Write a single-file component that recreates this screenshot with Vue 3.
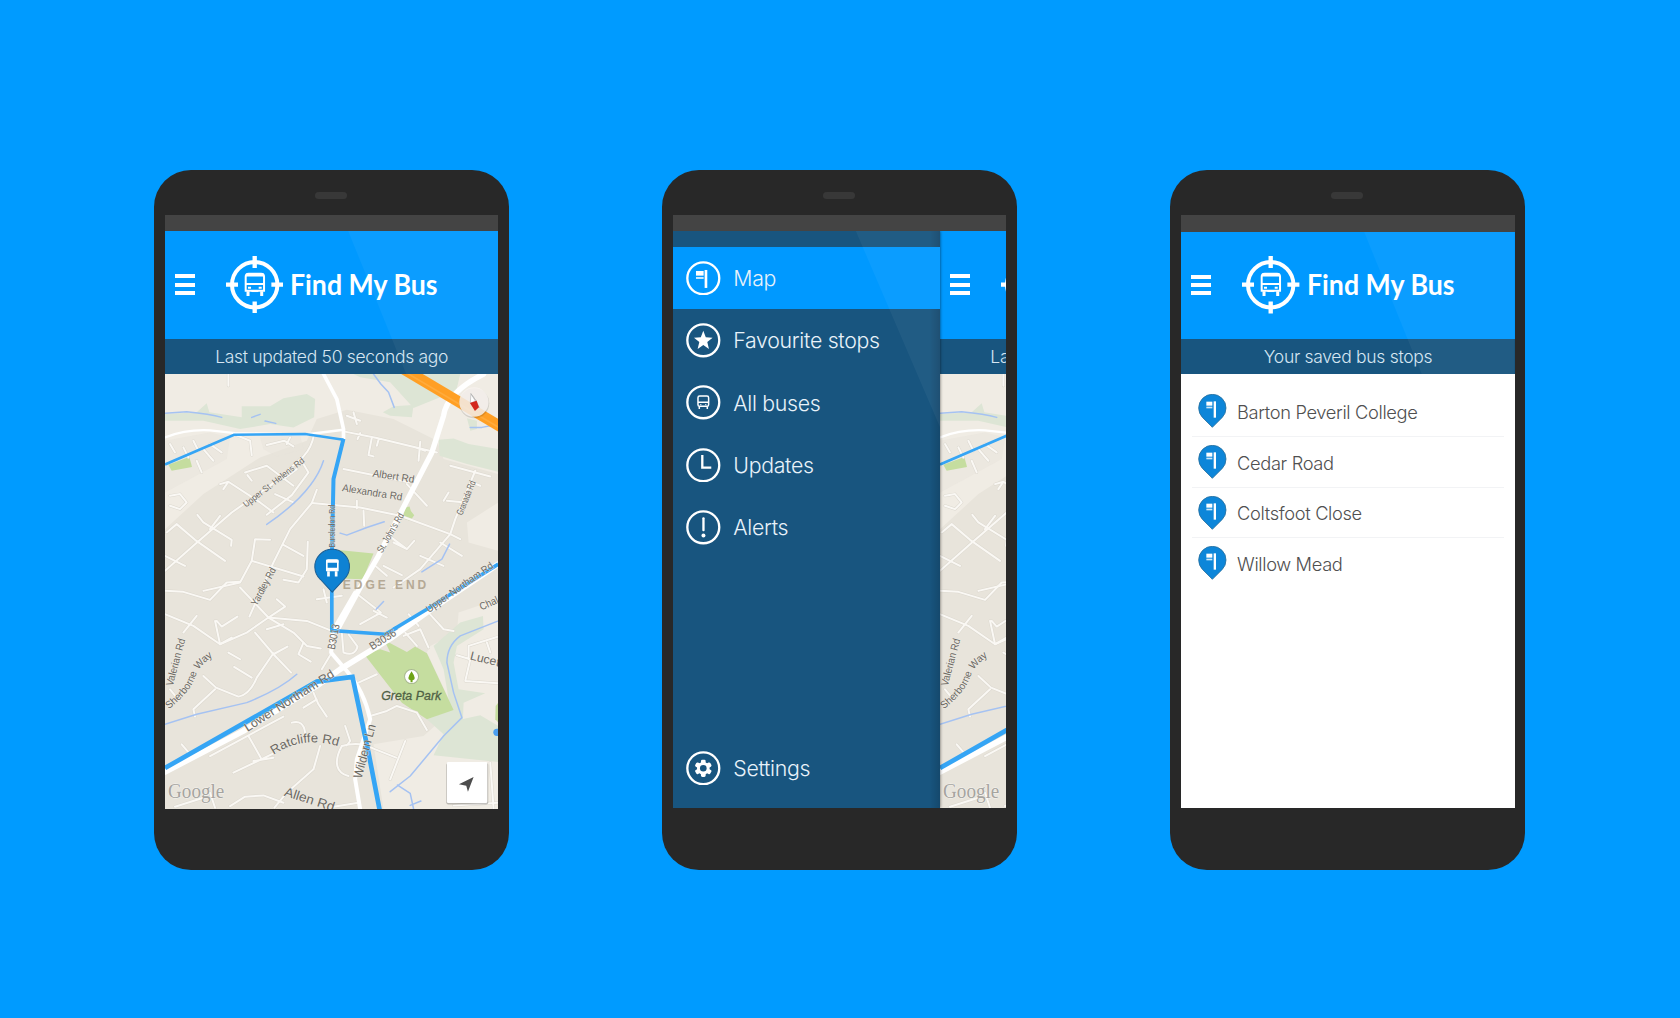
<script setup>
const screens = [
  { key: 'live', kind: 'map', title: 'Last updated 50 seconds ago', drawer: false },
  { key: 'menu', kind: 'map', title: 'Last updated 50 seconds ago', drawer: true },
  { key: 'saved', kind: 'list', title: 'Your saved bus stops', drawer: false },
]

const menu = [
  { icon: 'stop', label: 'Map' },
  { icon: 'star', label: 'Favourite stops' },
  { icon: 'bus', label: 'All buses' },
  { icon: 'clock', label: 'Updates' },
  { icon: 'alert', label: 'Alerts' },
  { icon: 'gear', label: 'Settings' },
]

const stops = ['Barton Peveril College', 'Cedar Road', 'Coltsfoot Close', 'Willow Mead']

const minorRoads = [
  'M15 605L105 525L215 430L330 350L430 262Q455 235 462 195',
  'M20 490L50 465L105 512L195 575M15 560L75 590',
  'M112 437L130 460L215 512L213 530M150 480L180 440',
  'M180 345L205 338L300 400L340 430M205 338L190 360',
  'M255 310L320 290L400 350M262 318L275 335',
  'M320 437L395 378L445 310L430 285',
  'M345 375L400 400M370 330L410 300',
  'M15 665L70 668L150 692L200 640L240 638',
  'M470 362L455 402L390 480L340 580L300 670L268 742',
  'M455 402L600 415L720 440L870 495L900 510',
  'M330 512L285 510L275 575L430 622M275 575L240 640L130 665',
  'M370 527L430 560M443 518L440 600L415 640L370 632',
  'M610 425L612 470M590 418V395',
  'M550 187L650 207L830 250M600 192L592 210M635 205L625 258L640 262M655 212L650 230M780 218L775 275M765 235L795 245',
  'M550 300L750 340',
  'M945 305L885 450L870 495L780 600L700 655',
  'M870 290L990 322M935 340L960 350M740 345L800 410M850 395L865 370M915 400L860 395',
  'M680 495L740 540L762 515M740 540L700 520M840 520L905 560M780 560L850 590',
  'M670 590L725 618M645 590L680 620',
  'M225 197L270 215L275 258M320 228L372 215L400 232M390 205L380 225',
  'M70 235L85 265M30 225L45 250M100 215L115 245M130 240L160 275M150 225L185 250M110 275L125 310',
  'M30 380L60 375L80 400L60 420L30 410M205 15V50M560 140L600 155M580 130L590 165',
  'M15 735L100 770L180 825L260 790L325 745L440 755L515 785',
  'M240 655L325 745L400 790L440 830L482 838M325 745L375 712L350 690',
  'M170 755L185 772L232 742M180 825L165 755M70 790L110 740',
  'M180 825L215 805M205 850L240 870',
  'M285 790L340 855L393 910M340 855L382 832M320 780L370 765',
  'M340 852L290 925Q270 975 235 982L168 955L130 920',
  'M222 893L275 925M105 1042L100 1020L165 960M30 960L50 985',
  'M430 820L415 855L452 877M515 850L485 900',
  'M460 970L475 1005L500 1042M430 1015L470 990',
  'M150 1160L370 1042M265 1100L302 1165M220 1210L345 1150M280 1175L340 1165M65 1125L88 1152',
  'M395 1060Q430 1050 435 1090',
  'M480 1130L460 1200L380 1270L343 1315',
  'M210 1310L255 1282L310 1278L370 1300M150 1270L165 1315M45 1312L130 1285',
  'M545 1130C518 1180 530 1212 565 1220M545 1130Q600 1115 640 1138L708 1165M735 1115L690 1230M555 1070L570 1115L560 1128',
  'M630 1040L680 1025L710 1010L770 1030L800 1082M595 940L650 915',
  'M585 670L662 730L600 765M640 725L680 745M545 680L470 690M490 660L500 700',
  'M545 790L550 850Q585 862 592 832L565 795',
  'M730 800L780 780L805 835M800 725L850 780L880 785M745 735L775 770M770 830L735 790',
  'M890 858L930 870L915 935L1014 942M925 870L925 830L1014 802M980 820L990 850',
  'M520 1312L595 1300M880 1308L1014 1300M990 1180L1000 1320',
]

const straightLabels = [
  { t: 'Upper St. Helens Rd', x: 258, y: 416, r: -38, s: 27, w: 224 },
  { t: 'Albert Rd', x: 636, y: 322, r: 9, s: 31, w: 126 },
  { t: 'Alexandra Rd', x: 545, y: 366, r: 9, s: 31, w: 182 },
  { t: 'Bursledon Rd', x: 525, y: 535, r: -90, s: 26, w: 128 },
  { t: "St. John's Rd", x: 666, y: 553, r: -60, s: 30, w: 132 },
  { t: 'Granada Rd', x: 906, y: 440, r: -68, s: 29, w: 108 },
  { t: 'Yardley Rd', x: 290, y: 712, r: -62, s: 31, w: 125 },
  { t: 'Upper Northam Rd', x: 806, y: 731, r: -35, s: 31, w: 238 },
  { t: 'Chal', x: 964, y: 724, r: -25, s: 32, w: 58 },
  { t: 'B3013', x: 524, y: 842, r: -79, s: 33, w: 76 },
  { t: 'B3036', x: 636, y: 843, r: -32, s: 33, w: 88 },
  { t: 'Valerian Rd', x: 38, y: 952, r: -75, s: 32, w: 146 },
  { t: 'Lower Northam Rd', x: 262, y: 1088, r: -32.5, s: 36, w: 312 },
  { t: 'Wildern Ln', x: 604, y: 1229, r: -75, s: 38, w: 166 },
  { t: 'Allen Rd', x: 370, y: 1278, r: 18, s: 39, w: 156 },
  { t: 'Lucet', x: 928, y: 870, r: 14, s: 36, w: 90 },
]
</script>

<template>
  <main class="stage">
    <section v-for="s in screens" :key="s.key" class="phone" :class="s.key">
      <div class="speaker"></div>
      <div class="screen">
        <div class="status"></div>
        <div class="viewport">
          <nav v-if="s.drawer" class="drawer">
            <div v-for="(m, i) in menu" :key="m.label" class="item" :class="{ active: i === 0, last: m.icon === 'gear' }">
              <svg class="badge" viewBox="0 0 104 104">
                <circle cx="52" cy="52" r="48" class="ring" />
                <g v-if="m.icon === 'stop'" fill="#fff">
                  <rect x="30" y="30" width="23" height="14" />
                  <rect x="30" y="48" width="23" height="6" opacity=".8" />
                  <rect x="56" y="27" width="8" height="54" />
                </g>
                <path v-else-if="m.icon === 'star'" fill="#fff" d="M52 23L59.500 43L80 44L64 57L69 78L52 66.500L35 78L40 57L24 44L44.500 43Z" />
                <g v-else-if="m.icon === 'bus'" class="line thin">
                  <rect x="36" y="33" width="32" height="31" rx="5" />
                  <path d="M36 52H68M40 65V72M64 65V72M43 59h3M58 59h3" />
                </g>
                <path v-else-if="m.icon === 'clock'" class="line" d="M49 21V59H76" />
                <g v-else-if="m.icon === 'alert'" fill="#fff">
                  <rect x="49" y="22" width="7" height="42" rx="3" />
                  <circle cx="52.500" cy="77" r="6" />
                </g>
                <g v-else>
                  <g fill="#fff">
                    <rect v-for="a in [0, 60, 120]" :key="a" x="45" y="26" width="14" height="52" rx="4" :transform="`rotate(${a} 52 52)`" />
                  </g>
                  <circle cx="52" cy="52" r="14.500" fill="none" stroke="#fff" stroke-width="9" />
                  <circle cx="52" cy="52" r="10" fill="#18557f" />
                </g>
              </svg>
              <span>{{ m.label }}</span>
            </div>
            <svg class="glare" viewBox="0 0 268 577"><path d="M183.500 0H268V197Z" /></svg>
          </nav>

          <div class="page">
            <header class="head">
              <div class="burger"><i></i><i></i><i></i></div>
              <svg class="target" viewBox="0 0 172 172">
                <g fill="none" stroke="#fff">
                  <circle cx="86" cy="86" r="68" stroke-width="12" />
                  <path d="M86 0V36M86 136V172M0 86H36M136 86H172" stroke-width="13" />
                  <path d="M59 104V62Q59 53 68 53H105Q114 53 114 62V104Z" stroke-width="6" />
                  <path d="M60 57H113" stroke-width="9" />
                  <path d="M59 84H114" stroke-width="6" />
                  <path d="M66 106V120M107 106V120" stroke-width="9" />
                  <path d="M66 95h9M98 95h9" stroke-width="6" />
                  <path d="M76 106H97" stroke-width="4" />
                </g>
              </svg>
              <svg class="brand" viewBox="0 0 150 40">
                <text x="0" y="30" textLength="147.500" lengthAdjust="spacingAndGlyphs">Find My Bus</text>
              </svg>
            </header>
            <div class="subhead"><span>{{ s.title }}</span></div>

            <svg v-if="s.kind === 'map'" class="map" viewBox="15 15 999 1305" preserveAspectRatio="xMinYMin slice">
              <rect x="15" y="15" width="999" height="1305" fill="#f0ece4" />
              <path class="town" d="M15 480L130 375L215 320L300 265L440 215L470 150L560 122L700 150L830 215L850 270L1014 315V400L920 460L925 520L1014 545V690L895 730L890 790L810 830L800 850L880 1020L790 1100L640 1125L670 1320H15Z" />
              <path class="town" d="M15 215L150 190L210 205L200 270L90 330L15 370ZM300 205L420 200L430 240L350 262L310 240Z" opacity=".5" />
              <g class="wood">
                <path d="M15 135L110 130L140 103L148 130L245 145L245 112L330 112L370 88L440 75L465 90L462 145L400 175L330 165L240 180L130 155L15 155Z" />
                <path d="M580 15H900L888 65L760 117L690 40L600 25Z" />
                <path d="M668 130L700 112L760 108L755 145L690 140Z" />
                <path d="M835 212L880 208L925 225L1014 240V308L920 285L838 260Z" />
                <path d="M900 760L968 740L970 780L890 830L880 880L895 960L975 972L910 1000L908 1050L880 1080L850 900L820 830Z" />
                <path d="M800 1050L880 1020L905 1050L960 1038L1014 1070V1178L820 1158L850 1095Z" />
                <path d="M920 148L950 155L950 180L930 185Z" />
              </g>
              <g class="park">
                <path d="M612 855L660 840L690 850L672 812L740 848L765 832L800 852L880 1022L800 1050L725 1000Z" />
                <path d="M527 542L640 553L608 630L540 628Z" />
                <path d="M735 415L748 412L752 426L762 438L750 455L728 448Z" />
                <path d="M25 287L88 264L96 294L35 305Z" />
                <path d="M1006 1010L1014 1000V1060L1005 1050Z" />
              </g>
              <g class="edge"><path v-for="d in minorRoads" :key="d" :d="d" /></g>
              <g class="minor"><path v-for="d in minorRoads" :key="d" :d="d" /></g>
              <g class="stream">
                <path d="M15 133L80 128Q150 135 185 145M275 145L300 136M315 156L347 163" />
                <path d="M640 15L662 45L685 70L702 115M490 275Q460 370 320 466M540 492L560 498L620 475L672 458" />
                <path d="M868 525L845 570L785 608M930 175H965L990 170M648 720L670 697" />
                <path d="M15 1065L110 1035L260 1000Q360 960 410 915" />
                <path d="M1014 755L900 800Q860 830 860 880L880 970L905 1045L850 1100L750 1220L690 1267M712 1247L750 1272L760 1318M750 1308L782 1295" />
              </g>
              <g class="major">
                <path d="M15 205Q80 180 150 184L225 192L430 197L550 182" stroke-width="7" />
                <path d="M490 15L530 90L550 180V210" stroke-width="11" />
                <path d="M970 15Q860 70 850 140L815 250L740 395L655 560L600 655L535 775" stroke-width="16" />
                <path d="M585 670L518 785L513 850L560 905Q612 965 630 1050L590 1170L585 1230L600 1320" stroke-width="12" />
                <path d="M15 1208L250 1085L470 950L540 900L690 808L810 722L1014 585" stroke-width="17" />
              </g>
              <path d="M730 0L1030 178" stroke="#ff9f24" stroke-width="33" />
              <path d="M740 12L1020 178" stroke="#ffab3c" stroke-width="5" />
              <g class="route">
                <path d="M15 286L222 197L435 195L550 212" stroke-width="8" />
                <path d="M550 209L520 330L515 570" stroke-width="12" />
                <path d="M515 650V784L675 795L710 775" stroke-width="11" />
                <path d="M700 780L800 720L1014 585" stroke-width="11" />
                <path d="M15 1196L470 937L577 923L625 1150L660 1330" stroke-width="14" />
              </g>
              <circle cx="1010" cy="1089" r="11" fill="#4a9ff0" />
              <g class="labels">
                <text v-for="l in straightLabels" :key="l.t" :font-size="l.s" :textLength="l.w" lengthAdjust="spacingAndGlyphs" :transform="`translate(${l.x} ${l.y}) rotate(${l.r})`">{{ l.t }}</text>
                <path :id="`sherborne-${s.key}`" d="M26 1020Q97 965 110 910Q127 880 184 843" fill="none" />
                <text font-size="31"><textPath :href="`#sherborne-${s.key}`" textLength="210" lengthAdjust="spacingAndGlyphs">Sherborne Way</textPath></text>
                <path :id="`ratcliffe-${s.key}`" d="M340 1157Q430 1095 544 1134" fill="none" />
                <text font-size="38"><textPath :href="`#ratcliffe-${s.key}`" textLength="203" lengthAdjust="spacingAndGlyphs">Ratcliffe Rd</textPath></text>
              </g>
              <text class="place" x="548" y="658" textLength="250">EDGE END</text>
              <text class="parkname" x="663" y="992" textLength="180" lengthAdjust="spacingAndGlyphs">Greta Park</text>
              <circle cx="754" cy="922" r="21" fill="#fff" stroke="#a8b890" stroke-width="3" />
              <path d="M754 906Q771 931 757 933V939H751V933Q737 931 754 906Z" fill="#6da316" />
              <text class="google" x="24" y="1285" textLength="169" lengthAdjust="spacingAndGlyphs">Google</text>

              <path d="M516 669L481 631A52 52 0 1 1 551 631Z" fill="#0e82d3" stroke="#1b5e93" stroke-width="3" />
              <g fill="none" stroke="#fff">
                <path d="M500 604V577Q500 573 504 573H529Q533 573 533 577V604Z" stroke-width="5" />
                <path d="M498 576H535M500 600H533" stroke-width="9" />
                <path d="M505 606V622M528 606V622" stroke-width="8" />
              </g>

              <circle cx="942" cy="103" r="45" fill="#000" opacity=".12" />
              <circle cx="941" cy="99" r="44" fill="#f8f3ef" opacity=".83" />
              <path d="M932 74L957 116L948 96Z M932 74L930 102L948 96Z" fill="#fff" stroke="#b5b5b5" stroke-width="2" />
              <path d="M929 102L949 95L956 115L944 126Z" fill="#d3281e" />

              <rect x="858" y="1181" width="126" height="124" rx="6" fill="#000" opacity=".22" />
              <rect x="860" y="1178" width="121" height="123" rx="4" fill="#fff" />
              <path d="M940 1223L896 1245L918 1249L923 1267Z" fill="#4d4d4d" />
            </svg>

            <ul v-else class="stops">
              <li v-for="n in stops" :key="n">
                <svg class="pin" viewBox="0 0 86 102">
                  <path d="M43 100L14 71A41 41 0 1 1 72 71Z" fill="#0d86d9" stroke="#2a719f" stroke-width="2.500" />
                  <rect x="25" y="23" width="18" height="12" fill="#fff" />
                  <rect x="25" y="38" width="18" height="5" fill="#fff" opacity=".8" />
                  <rect x="47" y="22" width="7" height="49" fill="#fff" />
                </svg>
                <span>{{ n }}</span>
              </li>
            </ul>
            <svg v-if="!s.drawer" class="glare" viewBox="0 0 333 143"><path d="M183 0H333V143H241Z" /></svg>
          </div>
        </div>
      </div>
    </section>
  </main>
</template>

<style>
body { margin: 0; background: #009bff; }
</style>

<style scoped>
.stage {
  box-sizing: border-box;
  width: 1680px;
  height: 1018px;
  padding: 170px 0 0 154px;
  display: flex;
  gap: 153.300px;
  background: #009bff;
  overflow: hidden;
  font-family: Inter, "Liberation Sans", sans-serif;
}
.phone {
  flex: none;
  box-sizing: border-box;
  width: 354.900px;
  height: 699.700px;
  padding: 22px 0 0 11px;
  border-radius: 37px;
  background: #282828;
}
.speaker { width: 32px; height: 7px; margin: 5px 0 16px 150px; border-radius: 3.500px; background: #383838; }
.screen { display: flex; flex-direction: column; width: 333.300px; height: 592.500px; overflow: hidden; }
.speaker { margin-top: 0; }
.live .screen { height: 594.300px; }
.status { flex: none; height: 16px; background: #444; }
.saved .status { height: 17px; }
.viewport { flex: 1; min-height: 0; display: flex; overflow: hidden; }
.page { flex: none; position: relative; width: 333.300px; display: flex; flex-direction: column; }

.head { flex: none; box-sizing: border-box; height: 108px; padding: 0 0 1px 9.700px; display: flex; align-items: center; background: #0099ff; }
.saved .head { height: 107px; }
.burger { display: flex; flex-direction: column; gap: 4.400px; width: 20.300px; }
.burger i { height: 4px; background: #fff; }
.target { width: 57.400px; height: 57.400px; margin-left: 31px; }
.brand { width: 150px; height: 40px; margin-left: 7px; overflow: visible; }
.brand text { font: 700 28px Lato, sans-serif; fill: #fff; }
.subhead { flex: none; height: 35px; display: flex; align-items: center; justify-content: center; background: #18557f; color: #d6e6f2; font-size: 17.500px; font-weight: 300; letter-spacing: -.3px; white-space: nowrap; }
.glare { position: absolute; left: 0; top: 0; width: 100%; pointer-events: none; }
.glare path { fill: rgba(255, 255, 255, .045); }
.map { display: block; flex: none; width: 333.300px; height: 435.400px; }

.drawer { position: relative; z-index: 1; flex: none; box-sizing: border-box; width: 267px; padding: 16px 0 8.500px; display: flex; flex-direction: column; background: linear-gradient(90deg, rgba(0,0,0,0) 96%, rgba(0,0,0,.15)), #18557f; box-shadow: 0 0 3px rgba(0, 0, 0, .6); }
.item { height: 62.300px; display: flex; align-items: center; padding-left: 13px; color: #e8f2fa; font-size: 21.300px; font-weight: 300; letter-spacing: -.3px; }
.item.active { background: #0099ff; }
.item.last { margin-top: auto; }
.badge { width: 34.600px; height: 34.600px; margin-right: 12.500px; }
.ring { fill: none; stroke: #fff; stroke-width: 7; }
.line { fill: none; stroke: #fff; stroke-width: 7; }
.line.thin { stroke-width: 4.500; }

.stops { flex: 1; margin: 0; padding: 12.300px 11px 0; list-style: none; background: #fff; }
.stops li { box-sizing: border-box; height: 50.700px; display: flex; align-items: center; padding-left: 6px; border-bottom: 1.500px solid #f2f3f5; color: #505050; font-size: 18.300px; font-weight: 300; letter-spacing: -.35px; }
.stops li span { position: relative; top: .7px; }
.stops li:last-child { border-color: transparent; }
.pin { width: 28.700px; height: 34px; margin-right: 10px; }

.town { fill: #e8e4db; }
.wood { fill: #dde5d5; }
.park { fill: #c5dd9f; }
.edge, .minor, .stream, .major, .route { fill: none; stroke-linejoin: round; stroke-linecap: round; }
.edge { stroke: #dcd8cf; stroke-width: 9; }
.minor { stroke: #faf8f4; stroke-width: 6; }
.stream { stroke: #a5c2f2; stroke-width: 4.500; }
.major { stroke: #fff; }
.route { stroke: #35a5f5; stroke-linejoin: miter; stroke-linecap: butt; }
.labels text { font-family: "Liberation Sans", sans-serif; fill: #6c6963; stroke: #f4f1ea; stroke-width: 3; stroke-opacity: .6; paint-order: stroke; }
.place { font: 700 36px "Liberation Sans", sans-serif; fill: #b5a995; }
.parkname { font: italic 400 37px "Liberation Sans", sans-serif; fill: #4f6044; stroke: #4f6044; stroke-width: .8; }
.google { font: 60px "Liberation Serif", serif; fill: #a6a49f; stroke: #fff; stroke-width: 3; stroke-opacity: .6; paint-order: stroke; }
</style>
